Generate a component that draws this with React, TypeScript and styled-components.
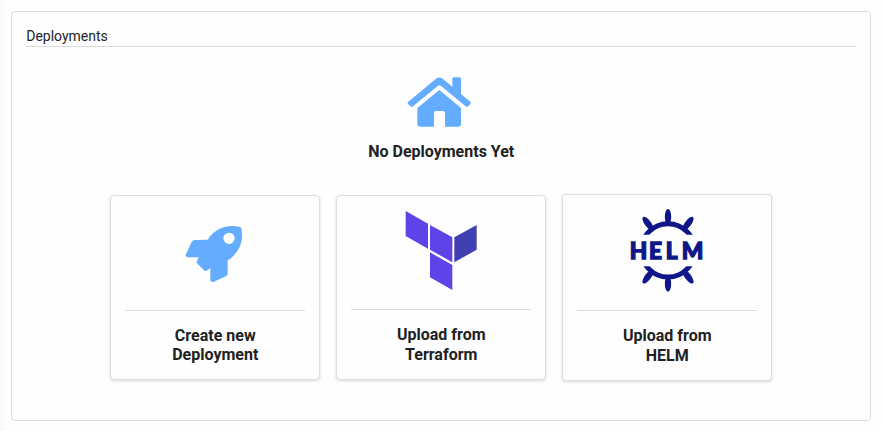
import React from 'react';
import styled, { createGlobalStyle } from 'styled-components';

const GlobalStyle = createGlobalStyle`
  *, *::before, *::after { box-sizing: border-box; }
  body {
    margin: 0;
    background: #fefefe;
    color: #212529;
    font-family: Roboto, "Liberation Sans", sans-serif;
  }
`;

const Page = styled.main`
  min-height: 431px;
  padding: 11px 12px 10px 11px;
  background: linear-gradient(to right, #fafafa, #fefefe 6px);
`;

const Panel = styled.section`
  height: 410px;
  padding: 14px;
  border: 1px solid #dcdddd;
  border-radius: 4px;
  background: #fefefe;
`;

const PanelHeader = styled.header`
  height: 21px;
  padding: 2px 0 0 0.2px;
  border-bottom: 1px solid #d9dadb;
  font-size: 14px;
  line-height: 16px;
`;

const EmptyState = styled.div`
  display: flex;
  flex-direction: column;
  align-items: center;
  padding-top: 18px;
`;

const Artwork = styled.svg`
  display: block;
  flex: none;
`;

const EmptyTitle = styled.h2`
  margin: 7px 0 0;
  padding-left: 0.5px;
  font-size: 16px;
  font-weight: 700;
  line-height: 19px;
  color: #212121;
`;

const CardRow = styled.div`
  display: flex;
  justify-content: center;
  align-items: center;
  gap: 16px;
  height: 187px;
  margin-top: 33px;
`;

const Card = styled.button<{ $height: number }>`
  display: flex;
  flex-direction: column;
  align-items: center;
  width: 210px;
  height: ${(p) => p.$height}px;
  padding: 0 14px;
  border: 1px solid #dcdddd;
  border-radius: 4px;
  background: #fefefe;
  box-shadow: 0 1px 3px rgba(0, 0, 0, 0.15);
  color: #212121;
  font: inherit;
  cursor: pointer;
`;

const CardArt = styled.div<{ $height: number; $top?: number }>`
  display: flex;
  justify-content: center;
  align-items: flex-start;
  width: 180px;
  height: ${(p) => p.$height}px;
  padding-top: ${(p) => p.$top ?? 4}px;
  border-bottom: 1px solid #dadbdc;
`;

const CardLabel = styled.span<{ $line: number }>`
  width: 110px;
  margin-top: 15px;
  padding-left: 0.5px;
  font-size: 16px;
  font-weight: 700;
  line-height: ${(p) => p.$line}px;
  text-align: center;
`;

const HomeIcon = () => (
  <Artwork width="80" height="70" viewBox="3 0 240 210" fill="#64acff">
    <path d="M24 111 L108 41 Q118 34 128 41 L157 65 V42 Q157 37 162 37 H178 Q183 37 183 42 V87 L211 110 Q214 114 211 117 L205 124 Q201 127 197 124 L122 62 Q118 59 114 62 L39 124 Q35 127 31 124 L24 117 Q21 114 24 111 Z" />
    <path d="M52 129 L118 75 L183 129 V178 Q183 185 176 185 H135 V143 Q135 138 130 138 H107 Q102 138 102 143 V185 H59 Q52 185 52 178 Z" />
  </Artwork>
);

const RocketIcon = () => (
  <Artwork width="80" height="90" viewBox="0 -45 240 270" fill="#64acff">
    <path
      fillRule="evenodd"
      d="M98 74 C115 48 142 33 170 33 Q184 33 195 36 Q198 37 199 40 Q201 49 201 64 C201 91 185 120 158 136 V176 Q158 180 154 183 L117 200 Q106 204 106 194 V160 L94 167 Q90 169 87 166 L66 145 Q63 142 66 138 L71 127 H38 Q29 126 33 117 L50 81 Q53 75 60 75 Z M162 53 A17 17 0 1 0 162 87 A17 17 0 1 0 162 53 Z"
    />
  </Artwork>
);

const TerraformIcon = () => (
  <Artwork width="90" height="100" viewBox="3 0 270 300" fill="#5f43e9">
    <path d="M32 33 L99 71 V146 L32 108 Z" />
    <path d="M105 75 L172 112 V187 L105 149 Z" />
    <path d="M105 157 L172 195 V270 L105 232 Z" />
    <path fill="#4040b2" d="M178 112 L245 75 V149 L178 187 Z" />
  </Artwork>
);

const HelmIcon = () => (
  <Artwork width="90" height="100" viewBox="0 0 270 300" fill="#0f1689">
    <clipPath id="helm-rim">
      <rect x="40" y="50" width="200" height="54" />
      <rect x="40" y="199" width="200" height="54" />
    </clipPath>
    <circle
      cx="138"
      cy="151"
      r="80"
      fill="none"
      stroke="#0f1689"
      strokeWidth="15"
      clipPath="url(#helm-rim)"
    />
    <ellipse cx="138" cy="51" rx="9.5" ry="24" />
    <ellipse cx="78" cy="71" rx="9.5" ry="25" transform="rotate(-37 78 71)" />
    <ellipse cx="198" cy="71" rx="9.5" ry="25" transform="rotate(37 198 71)" />
    <ellipse cx="138" cy="251" rx="9.5" ry="24" />
    <ellipse cx="78" cy="230" rx="9.5" ry="25" transform="rotate(37 78 230)" />
    <ellipse cx="198" cy="230" rx="9.5" ry="25" transform="rotate(-37 198 230)" />
    <text
      x="23 81 131 179"
      y="176"
      fontFamily="Lato, sans-serif"
      fontWeight="900"
      fontSize="68"
      stroke="#0f1689"
      strokeWidth="4"
    >
      HELM
    </text>
  </Artwork>
);

export default function App() {
  return (
    <>
      <GlobalStyle />
      <Page>
        <Panel>
          <PanelHeader>Deployments</PanelHeader>
          <EmptyState>
            <HomeIcon />
            <EmptyTitle>No Deployments Yet</EmptyTitle>
            <CardRow>
              <Card $height={185}>
                <CardArt $height={115}>
                  <RocketIcon />
                </CardArt>
                <CardLabel $line={19}>Create new Deployment</CardLabel>
              </Card>
              <Card $height={185}>
                <CardArt $height={114}>
                  <TerraformIcon />
                </CardArt>
                <CardLabel $line={20}>Upload from Terraform</CardLabel>
              </Card>
              <Card $height={187}>
                <CardArt $height={116} $top={5}>
                  <HelmIcon />
                </CardArt>
                <CardLabel $line={20}>Upload from HELM</CardLabel>
              </Card>
            </CardRow>
          </EmptyState>
        </Panel>
      </Page>
    </>
  );
}
